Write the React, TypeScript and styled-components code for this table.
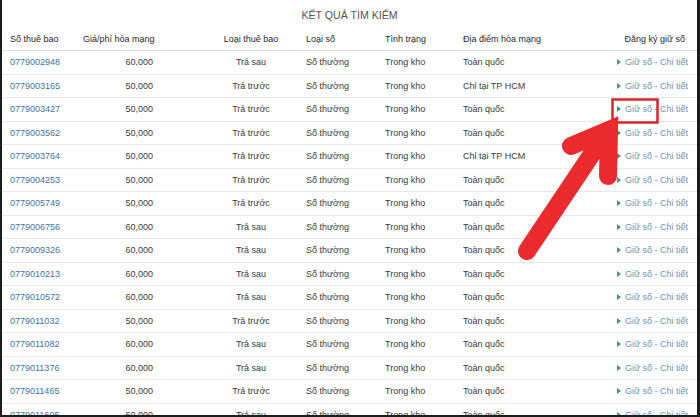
import React from "react";
import styled, { createGlobalStyle } from "styled-components";

const Global = createGlobalStyle`
  html, body { margin: 0; padding: 0; background: #1c1c1c; }
  body { font-family: "Liberation Sans", Arial, sans-serif; }
`;

const Frame = styled.div`
  position: relative;
  width: 695px;
  height: 415px;
  margin: 0 3px 0 2px;
  background: #fff;
  overflow: hidden;
`;

const Title = styled.div`
  height: 28px;
  display: flex;
  align-items: center;
  justify-content: center;
  font-size: 10.6px;
  color: #555;
  padding-top: 2px;
  box-sizing: border-box;
`;

const cols = "73px 86px 137px 79px 78px 120px 1fr";

const Row = styled.div<{ $head?: boolean }>`
  display: grid;
  grid-template-columns: ${cols};
  height: ${(p) => (p.$head ? "23px" : "23.5px")};
  box-sizing: border-box;
  border-bottom: 1px solid ${(p) => (p.$head ? "#dcdcdc" : "#e8e8e8")};
  font-size: 9px;
  color: ${(p) => (p.$head ? "#2a2a2a" : "#3a3a3a")};
`;

type Align = "left" | "right" | "center";

const Cell = styled.div<{ $align?: Align; $pl?: number; $pr?: number }>`
  display: flex;
  align-items: center;
  justify-content: ${(p) =>
    p.$align === "right" ? "flex-end" : p.$align === "center" ? "center" : "flex-start"};
  padding-left: ${(p) => p.$pl ?? 8}px;
  padding-right: ${(p) => p.$pr ?? 8}px;
  white-space: nowrap;
  overflow: hidden;
`;

const Phone = styled.span`
  color: #3f73a6;
`;

const Action = styled.span`
  display: inline-flex;
  align-items: center;
  color: #6a95b5;
`;

const Tri = styled.span`
  width: 0;
  height: 0;
  border-top: 3px solid transparent;
  border-bottom: 3px solid transparent;
  border-left: 4px solid #3f9a70;
  margin-right: 4px;
`;

const Overlay = styled.svg`
  position: absolute;
  left: -2px;
  top: 0;
  pointer-events: none;
`;

const rows: [string, string, string, string][] = [
  ["0779002948", "60,000", "Trả sau", "Toàn quốc"],
  ["0779003165", "50,000", "Trả trước", "Chỉ tại TP HCM"],
  ["0779003427", "50,000", "Trả trước", "Toàn quốc"],
  ["0779003562", "50,000", "Trả trước", "Toàn quốc"],
  ["0779003764", "50,000", "Trả trước", "Chỉ tại TP HCM"],
  ["0779004253", "50,000", "Trả trước", "Toàn quốc"],
  ["0779005749", "50,000", "Trả trước", "Toàn quốc"],
  ["0779006756", "60,000", "Trả sau", "Toàn quốc"],
  ["0779009326", "60,000", "Trả sau", "Toàn quốc"],
  ["0779010213", "60,000", "Trả sau", "Toàn quốc"],
  ["0779010572", "60,000", "Trả sau", "Toàn quốc"],
  ["0779011032", "50,000", "Trả trước", "Toàn quốc"],
  ["0779011082", "60,000", "Trả sau", "Toàn quốc"],
  ["0779011376", "60,000", "Trả sau", "Toàn quốc"],
  ["0779011465", "50,000", "Trả trước", "Toàn quốc"],
  ["0779011695", "60,000", "Trả sau", "Toàn quốc"],
];

export default function App() {
  return (
    <>
      <Global />
      <Frame>
        <Title>KẾT QUẢ TÌM KIẾM</Title>
        <Row $head>
          <Cell>Số thuê bao</Cell>
          <Cell>Giá/phí hòa mạng</Cell>
          <Cell $align="center" $pl={43} $pr={0}>Loại thuê bao</Cell>
          <Cell>Loại số</Cell>
          <Cell>Tình trạng</Cell>
          <Cell>Địa điểm hòa mạng</Cell>
          <Cell $align="right" $pr={12}>Đăng ký giữ số</Cell>
        </Row>
        {rows.map((r) => (
          <Row key={r[0]}>
            <Cell><Phone>{r[0]}</Phone></Cell>
            <Cell $align="right">{r[1]}</Cell>
            <Cell $align="center" $pl={43} $pr={0}>{r[2]}</Cell>
            <Cell>Số thường</Cell>
            <Cell>Trong kho</Cell>
            <Cell>{r[3]}</Cell>
            <Cell $align="right" $pr={9}>
              <Action><Tri />Giữ số - Chi tiết</Action>
            </Cell>
          </Row>
        ))}
        <Overlay width="700" height="417" viewBox="0 0 700 417">
          <rect x="612.5" y="99.5" width="45" height="23" fill="none" stroke="#d8262b" strokeWidth="2.5" />
          <path
            d="M527 251 L606 133 M571 146 L609 130 L608 176"
            fill="none"
            stroke="#ea2a2d"
            strokeWidth="18"
            strokeLinecap="round"
            strokeLinejoin="miter"
          />
        </Overlay>
      </Frame>
    </>
  );
}
